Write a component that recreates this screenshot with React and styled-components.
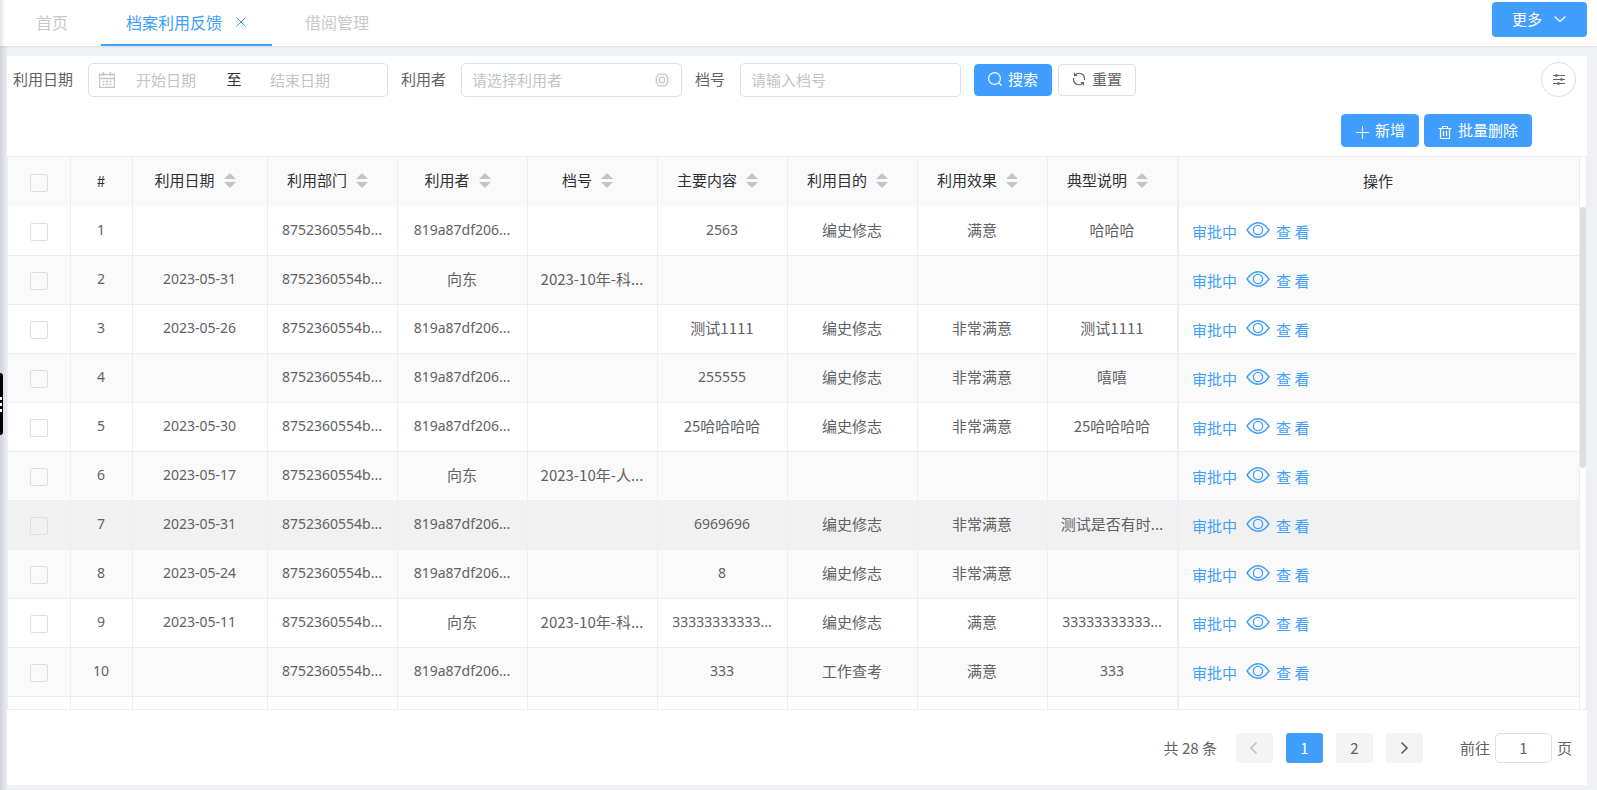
import { useState } from "react";
import styled, { createGlobalStyle, css } from "styled-components";

const columns = ["利用日期", "利用部门", "利用者", "档号", "主要内容", "利用目的", "利用效果", "典型说明"];

const DEPT = "8752360554b...";
const USER = "819a87df206...";

const rows = [
  ["", DEPT, USER, "", "2563", "编史修志", "满意", "哈哈哈"],
  ["2023-05-31", DEPT, "向东", "2023-10年-科...", "", "", "", ""],
  ["2023-05-26", DEPT, USER, "", "测试1111", "编史修志", "非常满意", "测试1111"],
  ["", DEPT, USER, "", "255555", "编史修志", "非常满意", "嘻嘻"],
  ["2023-05-30", DEPT, USER, "", "25哈哈哈哈", "编史修志", "非常满意", "25哈哈哈哈"],
  ["2023-05-17", DEPT, "向东", "2023-10年-人...", "", "", "", ""],
  ["2023-05-31", DEPT, USER, "", "6969696", "编史修志", "非常满意", "测试是否有时..."],
  ["2023-05-24", DEPT, USER, "", "8", "编史修志", "非常满意", ""],
  ["2023-05-11", DEPT, "向东", "2023-10年-科...", "33333333333...", "编史修志", "满意", "33333333333..."],
  ["", DEPT, USER, "", "333", "工作查考", "满意", "333"],
];

const isLatin = (text) => /^[\w.-]+$/.test(text);

const CloseIcon = () => (
  <Svg width="12" height="12" viewBox="0 0 12 12">
    <path d="M1.5 1.5l9 9M10.5 1.5l-9 9" />
  </Svg>
);

const CalendarIcon = () => (
  <Svg width="16" height="16" viewBox="0 0 16 16">
    <path d="M.5 2.5h15v13H.5zM.5 6.500h15M4.500 0v4M11.500 0v4" strokeWidth="1.300" />
    <path d="M3.500 9.500h2M7 9.500h2M10.500 9.500h2M3.500 12.500h2M7 12.500h2M10.500 12.500h2" strokeWidth="1.400" />
  </Svg>
);

const GearIcon = () => (
  <Svg width="14" height="14" viewBox="0 0 14 14">
    <path
      d="M4.300 1h1.500q1.200.8 2.400 0h1.500l1.300.9q0 1.500 1.300 2.100l.7 1.300q-1.100 1.700 0 3.400L12.300 10q-1.300.6-1.300 2.100l-1.300.9H8.200q-1.200-.8-2.400 0H4.300L3 12.100Q3 10.600 1.700 10L1 8.700q1.100-1.700 0-3.400L1.700 4Q3 3.400 3 1.900z"
      strokeWidth="1.200"
    />
    <circle cx="7" cy="7" r="2.800" strokeWidth="1.200" />
  </Svg>
);

const SearchIcon = () => (
  <Svg width="14" height="14" viewBox="0 0 14 14">
    <circle cx="6.500" cy="6.500" r="5.900" strokeWidth="1.200" />
    <path d="M10.800 10.800l2.700 2.700" strokeWidth="1.200" />
  </Svg>
);

const RefreshIcon = () => (
  <Svg width="14" height="14" viewBox="0 0 14 14">
    <path d="M1.500 6v2A5.400 5.400 0 0 0 10.800 11M12.500 8V6A5.400 5.400 0 0 0 3.200 3" strokeWidth="1.200" />
    <path d="M2.500 .8v2.700h2.700M11.500 13.200v-2.700H8.800" strokeWidth="1.200" />
  </Svg>
);

const PlusIcon = () => (
  <Svg width="14" height="14" viewBox="0 0 14 14">
    <path d="M7.500 1v13M1 7.500h13" />
  </Svg>
);

const TrashIcon = () => (
  <Svg width="14" height="14" viewBox="0 0 14 14">
    <path d="M.5 3.500h13M4.500 3.500v-2h5v2M2.500 3.500v10h9v-10M5.500 6v5M8.500 6v5" strokeWidth="1.200" />
  </Svg>
);

const SlidersIcon = () => (
  <Svg width="12" height="12" viewBox="0 0 12 12">
    <path d="M0 1.500h12M0 5.500h12M0 9.500h12" />
    <path d="M2.500 1.500h2M7.500 5.500h2M4.500 9.500h2" strokeWidth="2.600" />
  </Svg>
);

const ChevronIcon = ({ dir, bold }) => {
  const paths = {
    down: "M1.500 4.500l5.500 5 5.500-5",
    left: "M9.500 1.500L4 7l5.500 5.500",
    right: "M4.500 1.500L10 7l-5.500 5.500",
  };
  return (
    <Svg width="14" height="14" viewBox="0 0 14 14">
      <path d={paths[dir]} strokeWidth={bold ? 1.700 : 1.200} />
    </Svg>
  );
};

const EyeIcon = () => (
  <Svg width="24" height="16" viewBox="0 0 24 16">
    <path d="M1 8Q6 .8 12 .8T23 8Q18 15.200 12 15.200T1 8z" strokeWidth="1.400" />
    <circle cx="12" cy="8" r="4.600" strokeWidth="1.400" />
  </Svg>
);

const ColGroup = () => (
  <colgroup>
    <col width="63" />
    <col width="62" />
    <col width="135" />
    {columns.slice(1).map((name) => (
      <col key={name} width="130" />
    ))}
    <col />
  </colgroup>
);

const App = () => {
  const [page, setPage] = useState(1);
  const [selected, setSelected] = useState([]);

  const toggle = (i) => {
    setSelected(selected.includes(i) ? selected.filter((n) => n !== i) : [...selected, i]);
  };

  const toggleAll = () => {
    setSelected(selected.length === rows.length ? [] : rows.map((_, i) => i));
  };

  return (
    <Page>
      <GlobalStyle />
      <SideHandle aria-label="展开菜单">
        <i />
        <i />
        <i />
      </SideHandle>

      <TopBar>
        <Tabs>
          <Tab href="#home">首页</Tab>
          <Tab href="#feedback" $active>
            档案利用反馈
            <CloseIcon />
          </Tab>
          <Tab href="#borrow">借阅管理</Tab>
        </Tabs>
        <MoreButton>
          更多
          <ChevronIcon dir="down" />
        </MoreButton>
      </TopBar>

      <Card>
        <Filters>
          <Label htmlFor="start">利用日期</Label>
          <DateRange>
            <CalendarIcon />
            <DateInput id="start" placeholder="开始日期" />
            <span>至</span>
            <DateInput aria-label="结束日期" placeholder="结束日期" />
          </DateRange>
          <Label htmlFor="user">利用者</Label>
          <Field>
            <input id="user" placeholder="请选择利用者" />
            <GearIcon />
          </Field>
          <Label htmlFor="fileNo">档号</Label>
          <Field>
            <input id="fileNo" placeholder="请输入档号" />
          </Field>
          <FilterButtons>
            <Button $primary>
              <SearchIcon />
              搜索
            </Button>
            <Button>
              <RefreshIcon />
              重置
            </Button>
          </FilterButtons>
          <RoundButton aria-label="列设置">
            <SlidersIcon />
          </RoundButton>
        </Filters>

        <Actions>
          <Button $primary>
            <PlusIcon />
            新增
          </Button>
          <Button $primary>
            <TrashIcon />
            批量删除
          </Button>
        </Actions>

        <TableBox>
          <TableScroll>
            <Table>
              <ColGroup />
              <thead>
                <tr>
                  <Th>
                    <Checkbox
                      aria-label="全选"
                      checked={selected.length === rows.length}
                      onChange={toggleAll}
                    />
                  </Th>
                  <Th>#</Th>
                  {columns.map((name) => (
                    <Th key={name}>
                      <HeadLabel>
                        {name}
                        <SortArrows />
                      </HeadLabel>
                    </Th>
                  ))}
                  <Th $fixed>操作</Th>
                </tr>
              </thead>
              <tbody>
                {rows.map((row, i) => (
                  <Row key={i} $hover={i === 6}>
                    <Td>
                      <Checkbox
                        aria-label={`选择第${i + 1}行`}
                        checked={selected.includes(i)}
                        onChange={() => toggle(i)}
                      />
                    </Td>
                    <Td $latin>{i + 1}</Td>
                    {row.map((text, j) => (
                      <Td key={j} $latin={isLatin(text)}>
                        {text}
                      </Td>
                    ))}
                    <Td $fixed>
                      <RowLinks>
                        <a href="#status">审批中</a>
                        <ViewLink href="#view">
                          <EyeIcon />
                          查 看
                        </ViewLink>
                      </RowLinks>
                    </Td>
                  </Row>
                ))}
                <Row>
                  {columns.map((name) => (
                    <Td key={name} />
                  ))}
                  <Td />
                  <Td />
                  <Td $fixed />
                </Row>
              </tbody>
            </Table>
          </TableScroll>
          <Gutter>
            <Thumb />
          </Gutter>
        </TableBox>

        <Pagination>
          <span>共 28 条</span>
          <Pager>
            <PageButton aria-label="上一页" disabled={page === 1} onClick={() => setPage(1)}>
              <ChevronIcon dir="left" bold />
            </PageButton>
            {[1, 2].map((n) => (
              <PageButton key={n} $active={page === n} onClick={() => setPage(n)}>
                {n}
              </PageButton>
            ))}
            <PageButton aria-label="下一页" disabled={page === 2} onClick={() => setPage(2)}>
              <ChevronIcon dir="right" bold />
            </PageButton>
          </Pager>
          <Jumper>
            前往
            <input
              value={page}
              onChange={(e) => setPage(Number(e.target.value) || 1)}
            />
            页
          </Jumper>
        </Pagination>
      </Card>
    </Page>
  );
};

const GlobalStyle = createGlobalStyle`
  * {
    box-sizing: border-box;
  }
  body {
    margin: 0;
  }
  body, button, input {
    font-family: "Noto Sans CJK SC", sans-serif;
    font-size: 15px;
    line-height: 20px;
    color: #606266;
  }
  button {
    cursor: pointer;
  }
  a {
    color: #409eff;
    text-decoration: none;
  }
  input {
    min-width: 0;
    padding: 0;
    outline: none;
    &::placeholder {
      color: #c0c4cc;
    }
  }
`;

const Svg = styled.svg`
  flex: none;
  fill: none;
  stroke: currentColor;
`;

const Page = styled.div`
  position: relative;
  display: flex;
  flex-direction: column;
  height: 100vh;
  overflow: hidden;
  background: linear-gradient(to right, #d0d4d9, #e7ebf0 6px, #eff1f5 8px);
`;

const SideHandle = styled.button`
  position: absolute;
  left: 0;
  top: 373px;
  width: 3px;
  height: 62px;
  padding: 0;
  border: 0;
  border-radius: 0 3px 3px 0;
  background: #000;
  display: flex;
  flex-direction: column;
  align-items: flex-start;
  justify-content: center;
  gap: 3px;

  i {
    width: 2px;
    height: 3px;
    background: #fff;
  }
`;

const TopBar = styled.header`
  display: flex;
  align-items: flex-start;
  justify-content: space-between;
  height: 46px;
  padding: 0 10px 0 11px;
  background: linear-gradient(to right, #e4e5e8, #fff 5px);
  box-shadow: 0 1px 2px rgba(0, 21, 41, 0.08);
`;

const Tabs = styled.nav`
  display: flex;
  gap: 8px;
  height: 46px;
`;

const Tab = styled.a`
  display: flex;
  align-items: center;
  gap: 13px;
  padding: 0 25px;
  font-size: 16px;
  color: #c8c9cc;
  border-bottom: 2px solid transparent;
  ${({ $active }) =>
    $active &&
    css`
      color: #409eff;
      border-color: #409eff;
    `}
`;

const MoreButton = styled.button`
  display: flex;
  align-items: center;
  gap: 11px;
  height: 35px;
  margin-top: 2px;
  padding: 0 20px 2px;
  border: 0;
  border-radius: 4px;
  background: #409eff;
  color: #fff;
`;

const Card = styled.main`
  flex: 1;
  min-height: 0;
  display: flex;
  flex-direction: column;
  margin: 10px 10px 5px 7px;
  background: #fff;
`;

const Filters = styled.div`
  display: flex;
  align-items: center;
  padding: 6px 11px 0 6px;
`;

const Label = styled.label`
  padding: 0 15px 2px 0;
`;

const fieldBox = css`
  display: flex;
  align-items: center;
  height: 34px;
  margin-right: 13px;
  padding: 0 12px 0 10px;
  border: 1px solid #dcdfe6;
  border-radius: 5px;

  svg {
    color: #c0c4cc;
  }
  input {
    border: 0;
    background: none;
  }
`;

const DateRange = styled.div`
  ${fieldBox}
  width: 300px;

  span {
    width: 30px;
    padding-bottom: 2px;
    text-align: center;
    color: #303133;
  }
`;

const DateInput = styled.input`
  width: 104px;
  padding-left: 21px;
`;

const Field = styled.div`
  ${fieldBox}
  width: 221px;

  input {
    flex: 1;
  }
`;

const FilterButtons = styled.div`
  display: flex;
  gap: 6px;
`;

const Button = styled.button`
  display: flex;
  align-items: center;
  gap: 6px;
  height: 32px;
  padding: 0 13px 2px;
  border: 1px solid ${({ $primary }) => ($primary ? "#409eff" : "#dcdfe6")};
  border-radius: 4px;
  background: ${({ $primary }) => ($primary ? "#409eff" : "#fff")};
  color: ${({ $primary }) => ($primary ? "#fff" : "#606266")};
`;

const RoundButton = styled.button`
  display: flex;
  align-items: center;
  justify-content: center;
  width: 35px;
  height: 35px;
  margin-left: auto;
  padding: 0;
  border: 1px solid #dcdfe6;
  border-radius: 50%;
  background: #fff;
`;

const Actions = styled.div`
  display: flex;
  justify-content: flex-end;
  gap: 5px;
  padding: 17px 55px 9px 0;

  button {
    height: 33px;
  }
  svg {
    margin-top: 4px;
  }
`;

const TableBox = styled.div`
  flex: 1;
  min-height: 0;
  display: flex;
  border: 1px solid #ebeef5;
`;

const TableScroll = styled.div`
  flex: 1;
  overflow: hidden;
`;

const Table = styled.table`
  width: 100%;
  table-layout: fixed;
  border-collapse: separate;
  border-spacing: 0;
`;

const cell = css`
  padding: 0 1px 2px 0;
  border-right: 1px solid #ebeef5;
  text-align: center;
  white-space: nowrap;
  overflow: hidden;
  ${({ $fixed }) =>
    $fixed &&
    css`
      box-shadow: inset 1px 0 #ebeef5;
    `}
`;

const Th = styled.th`
  ${cell}
  height: 50px;
  background: #fafafa;
  font-weight: 400;
  color: #303133;
`;

const Td = styled.td`
  ${cell}
  height: 49px;
  border-bottom: 1px solid #ebeef5;
  ${({ $latin }) =>
    $latin &&
    css`
      font-family: "Noto Sans", sans-serif;
      font-size: 14px;
    `}
`;

const Row = styled.tr`
  background: ${({ $hover }) => ($hover ? "#f1f1f1" : "#fff")};

  &:nth-child(even) {
    background: #fafafa;
  }
`;

const Checkbox = styled.input.attrs({ type: "checkbox" })`
  appearance: none;
  display: block;
  width: 18px;
  height: 18px;
  margin: 4px auto 0;
  border: 1px solid #dcdfe6;
  border-radius: 2px;

  &:checked {
    background: #409eff;
    border-color: #409eff;
  }
`;

const HeadLabel = styled.div`
  display: flex;
  align-items: center;
  justify-content: center;
  gap: 9px;
  padding: 0 9px 2px 0;
`;

const SortArrows = styled.i`
  display: flex;
  flex-direction: column;
  gap: 3px;

  &::before,
  &::after {
    content: "";
    border: 6px solid transparent;
  }
  &::before {
    border-top-width: 0;
    border-bottom-color: #c0c4cc;
  }
  &::after {
    border-bottom-width: 0;
    border-top-color: #c0c4cc;
  }
`;

const RowLinks = styled.div`
  display: flex;
  align-items: center;
  gap: 9px;
  padding: 4px 0 0 14px;
`;

const ViewLink = styled.a`
  display: flex;
  gap: 6px;
`;

const Gutter = styled.div`
  width: 6px;
  padding-top: 50px;
`;

const Thumb = styled.div`
  height: 52%;
  border-radius: 3px 3px 4px 4px;
  background: #dddee0;
`;

const Pagination = styled.footer`
  display: flex;
  align-items: center;
  justify-content: flex-end;
  height: 75px;
  padding-right: 15px;
`;

const Pager = styled.div`
  display: flex;
  gap: 13px;
  margin: 0 37px 0 19px;
`;

const PageButton = styled.button`
  display: flex;
  align-items: center;
  justify-content: center;
  width: 37px;
  height: 30px;
  padding: 0;
  border: 0;
  border-radius: 3px;
  background: ${({ $active }) => ($active ? "#409eff" : "#f4f4f5")};
  color: ${({ $active }) => ($active ? "#fff" : "#606266")};

  &:disabled {
    color: #c0c4cc;
  }
`;

const Jumper = styled.label`
  display: flex;
  align-items: center;
  gap: 5px;

  input {
    width: 57px;
    height: 30px;
    border: 1px solid #dcdfe6;
    border-radius: 5px;
    text-align: center;
  }
`;

export default App;
